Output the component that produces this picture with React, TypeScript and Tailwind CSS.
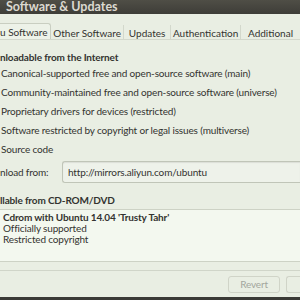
import React from "react";

const sources = [
  "Canonical-supported free and open-source software (main)",
  "Community-maintained free and open-source software (universe)",
  "Proprietary drivers for devices (restricted)",
  "Software restricted by copyright or legal issues (multiverse)",
  "Source code",
];

const tabs = [
  { label: "Other Software", width: "w-[74px]" },
  { label: "Updates", width: "w-[49px]" },
  { label: "Authentication", width: "w-[72px]" },
  { label: "Additional", width: "w-[62px]" },
];

export default function App() {
  return (
    <div className="flex h-[300px] w-[300px] flex-col overflow-hidden bg-[#e9eee3] font-[family-name:Lato,sans-serif] text-[10px] tracking-[-0.15px] text-[#333330]">
      {/* title bar */}
      <div className="flex h-[14px] shrink-0 items-center bg-gradient-to-b from-[#4f4e46] to-[#3e3d38] pl-[6px] pt-[1px] text-[12.5px] font-bold tracking-[0px] text-[#dcd9d0]">
        Software &amp; Updates
      </div>

      {/* tabs */}
      <div className="flex h-[26px] shrink-0 items-end whitespace-nowrap border-b border-[#d3d8cc] tracking-[0px]">
        <div className="flex h-[16px] w-[53px] items-center rounded-tr-[3px] border-r border-t border-[#c9cec1] bg-[#edf2e8] pt-[1px]">
          u Software
        </div>
        {tabs.map((t, i) => (
          <div
            key={t.label}
            className={`flex h-[14px] ${t.width} items-center justify-center pt-[2px] ${i > 0 ? "border-l border-[#d3d8cc]" : ""}`}
          >
            {t.label}
          </div>
        ))}
      </div>

      {/* body */}
      <div className="flex flex-col whitespace-nowrap">
        <div className="mt-[8px] h-[16px] font-bold leading-[18px]">
          nloadable from the Internet
        </div>
        {sources.map((s) => (
          <div key={s} className="h-[19px] pl-[1px] leading-[19px]">
            {s}
          </div>
        ))}

        <div className="mt-[2px] flex h-[22px] items-center">
          <span className="w-[62px] pt-[1px]">nload from:</span>
          <div className="flex h-[22px] flex-1 items-center rounded-l-[3px] border border-r-0 border-[#c0c5b8] bg-[#eef2ea] pl-[5px] pt-[1px] shadow-[inset_0_1px_1px_rgba(0,0,0,0.08)]">
            http://mirrors.aliyun.com/ubuntu
          </div>
        </div>

        <div className="mt-[9px] h-[17px] font-bold leading-[17px]">
          llable from CD-ROM/DVD
        </div>

        <div className="flex h-[53px] flex-col border-y border-[#cdd2c5] bg-[#f3f8ef] pl-[3px] pt-[2px]">
          <div className="h-[11px] font-bold leading-[11px]">Cdrom with Ubuntu 14.04 'Trusty Tahr'</div>
          <div className="h-[11px] leading-[11px]">Officially supported</div>
          <div className="h-[11px] leading-[11px]">Restricted copyright</div>
        </div>

        <div className="mt-[8px] border-t border-[#d0d5c9]" />

        <div className="flex h-[26px] items-center justify-end gap-[6px]">
          <div className="flex h-[17px] w-[52px] items-center justify-center rounded-[3px] border border-[#d0d4c8] text-[#a3a69d]">
            Revert
          </div>
          <div className="h-[17px] w-[14px] rounded-l-[3px] border border-r-0 border-[#d0d4c8]" />
        </div>
      </div>

      <div className="mt-auto h-[3px] shrink-0 bg-[#3a3a36]" />
    </div>
  );
}
